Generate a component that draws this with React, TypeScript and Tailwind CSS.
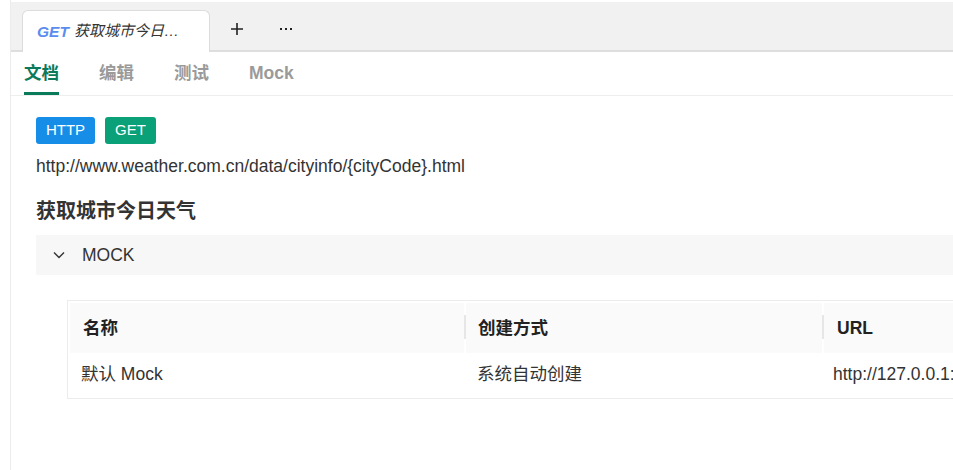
import React from "react";

const font = { fontFamily: '"Liberation Sans", "Noto Sans CJK SC", sans-serif' };

const subTabs = ["文档", "编辑", "测试", "Mock"];

export default function App() {
  return (
    <div className="w-[953px] h-[470px] bg-white flex overflow-hidden" style={font}>
      <div className="w-[10px] shrink-0" />
      <div className="flex-1 min-w-0 border-l border-[#ececec] flex flex-col">
        {/* top tab strip */}
        <div className="mt-[2px] h-[50px] bg-[#f1f1f1] border-b-2 border-[#dedede] flex items-end pl-[11px]">
          <div className="w-[188px] h-[42px] -mb-[2px] bg-white border border-b-0 border-[#dcdcdc] rounded-t-[6px] flex items-center px-[14px] gap-[5px] italic">
            <span className="font-bold text-[15.5px] text-[#5b8def]">GET</span>
            <span className="text-[#333] text-[15px] truncate">获取城市今日…</span>
          </div>
          <div className="h-[42px] flex items-center">
            <span className="ml-[19px] w-[16px] flex justify-center">
              <svg width="14" height="14" viewBox="0 0 14 14">
                <path d="M7 1v12M1 7h12" stroke="#222" strokeWidth="1.6" />
              </svg>
            </span>
            <span className="ml-[35px] flex gap-[3px]">
              <span className="w-[2px] h-[2px] bg-[#222]" />
              <span className="w-[2px] h-[2px] bg-[#222]" />
              <span className="w-[2px] h-[2px] bg-[#222]" />
            </span>
          </div>
        </div>
        {/* sub tabs */}
        <div className="h-[44px] border-b border-[#eeeeee] flex items-end pl-[13px] gap-[40px]">
          {subTabs.map((t, i) => (
            <div
              key={t}
              className={
                i === 0
                  ? "h-full flex items-center text-[17.5px] font-bold text-[#0b7a5a] border-b-[3px] border-[#0b7a5a] pt-[3px]"
                  : "h-full flex items-center text-[17.5px] font-bold text-[#9a9a9a] border-b-[3px] border-transparent pt-[3px]"
              }
            >
              {t}
            </div>
          ))}
        </div>
        {/* content */}
        <div className="pl-[25px] pt-[21px]">
          <div className="flex gap-[10px]">
            <span className="h-[27px] w-[59px] rounded-[3px] bg-[#168ee8] text-white text-[15px] flex items-center justify-center">HTTP</span>
            <span className="h-[27px] w-[51px] rounded-[3px] bg-[#0aa078] text-white text-[15px] flex items-center justify-center">GET</span>
          </div>
          <div className="mt-[10px] text-[17.5px] text-[#333] leading-[24px]">
            http://www.weather.com.cn/data/cityinfo/{"{cityCode}"}.html
          </div>
          <div className="mt-[20px] text-[20px] font-bold text-[#333] leading-[26px]">获取城市今日天气</div>
          <div className="mt-[11px] h-[40px] bg-[#f7f7f7] flex items-center">
            <span className="ml-[17px] w-[12px] flex justify-center">
              <svg width="12" height="8" viewBox="0 0 12 8">
                <path d="M1 1.5l5 5 5-5" fill="none" stroke="#333" strokeWidth="1.4" />
              </svg>
            </span>
            <span className="ml-[17px] text-[17.5px] text-[#333]">MOCK</span>
          </div>
          <div className="mt-[25px] ml-[31px] border border-[#ececec] border-r-0 p-[2px] pr-0">
            <div className="grid grid-cols-[396px_358px_1fr] bg-[#fafafa] h-[50px] items-center text-[17.5px] font-bold text-[#222]">
              <div className="pl-[13px] h-full flex items-center border-r-2 border-white relative">
                名称
                <span className="absolute right-[-2px] top-[12px] h-[24px] w-[2px] bg-[#e6e6e6]" />
              </div>
              <div className="pl-[12px] h-full flex items-center border-r-2 border-white relative">
                创建方式
                <span className="absolute right-[-2px] top-[12px] h-[24px] w-[2px] bg-[#e6e6e6]" />
              </div>
              <div className="pl-[13px] h-full flex items-center">URL</div>
            </div>
            <div className="grid grid-cols-[396px_358px_1fr] h-[43px] items-center text-[17.5px] text-[#333]">
              <div className="pl-[11px]">默认 Mock</div>
              <div className="pl-[11px]">系统自动创建</div>
              <div className="pl-[9px] whitespace-nowrap overflow-hidden">http://127.0.0.1:</div>
            </div>
          </div>
        </div>
      </div>
    </div>
  );
}
